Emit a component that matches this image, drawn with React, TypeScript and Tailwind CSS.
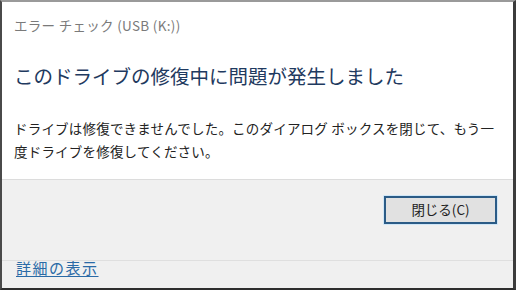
import React from "react";

export default function App() {
  const font = { fontFamily: '"Noto Sans CJK JP", "Noto Sans", sans-serif' };
  return (
    <div
      className="w-[516px] h-[290px] bg-white flex flex-col border-l-2 border-t-2 border-r-[3px] border-b-2 border-l-[#4a4a4a] border-t-[#9a9a9a] border-r-[#3c3c3c] border-b-[#2e2e2e] overflow-hidden"
      style={font}
    >
      <div className="h-[177px] bg-white flex flex-col pl-[12px] pr-[10px]">
        <div className="mt-[13px] text-[13.5px] leading-[20px] text-[#7a7a7a] tracking-[0.3px]">
          エラー チェック (USB (K:))
        </div>
        <div className="mt-[27px] text-[19.5px] leading-[28px] text-[#1f3a60]">
          このドライブの修復中に問題が発生しました
        </div>
        <div className="mt-[27px] text-[13.5px] leading-[23px] text-[#222] tracking-[0.2px]">
          ドライブは修復できませんでした。このダイアログ ボックスを閉じて、もう一
          <br />
          度ドライブを修復してください。
        </div>
      </div>
      <div className="h-[81px] bg-[#f0f0f0] border-t border-[#dcdcdc] flex justify-end items-start pr-[15px] pt-[15px]">
        <div className="rounded-[1px] p-[1px] bg-[#cfe6f7]">
          <button className="w-[113px] h-[28px] bg-[#e1e1e1] border-2 border-[#2b5b86] text-[13.5px] text-[#222] flex items-center justify-center leading-none">
            閉じる(C)
          </button>
        </div>
      </div>
      <div className="flex-1 bg-[#f0f0f0] border-t border-[#dfdfdf] pl-[14px] pt-0">
        <span className="block text-[15px] leading-[14px] text-[#2a6aa6] underline underline-offset-[2px] tracking-[1.5px]">
          詳細の表示
        </span>
      </div>
    </div>
  );
}
